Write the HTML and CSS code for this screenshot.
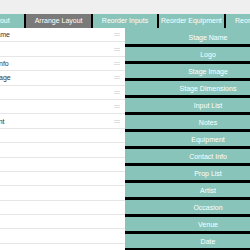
FILE: index.html
```html
<!DOCTYPE html>
<html lang="en">
<head>
  <meta charset="UTF-8">
  <title>Stage Plot | Arrange Layout</title>
  <link rel="stylesheet" href="styles.css">
</head>
<body>
  <div class="page">
    <div class="tabs">
      <div class="tab">Edit Layout</div>
      <div class="tab active">Arrange Layout</div>
      <div class="tab">Reorder Inputs</div>
      <div class="tab">Reorder Equipment</div>
      <div class="tab">Reorder Props</div>
    </div>

    <div class="main">
      <ul class="order-list">
        <li>Stage Name<span class="handle"></span></li>
        <li>Logo<span class="handle"></span></li>
        <li>Contact Info<span class="handle"></span></li>
        <li>Stage Image<span class="handle"></span></li>
        <li>Input List<span class="handle"></span></li>
        <li>Notes<span class="handle"></span></li>
        <li>Equipment<span class="handle"></span></li>
        <li></li>
        <li></li>
        <li></li>
        <li></li>
        <li></li>
        <li></li>
        <li></li>
        <li></li>
      </ul>

      <div class="sections">
        <button>Stage Name</button>
        <button>Logo</button>
        <button>Stage Image</button>
        <button>Stage Dimensions</button>
        <button>Input List</button>
        <button>Notes</button>
        <button>Equipment</button>
        <button>Contact Info</button>
        <button>Prop List</button>
        <button>Artist</button>
        <button>Occasion</button>
        <button>Venue</button>
        <button>Date</button>
      </div>
    </div>
  </div>
</body>
</html>
```

FILE: styles.css
```css
body {
  margin: 0;
  background-color: #efefef;
  font-family: 'Liberation Sans', Arial, sans-serif;
  overflow: hidden;
}

.page {
  width: 332px;
  margin-left: -41px;
}

.tabs {
  display: flex;
  margin-top: 14px;
  height: 14px;
}

.tab {
  flex: 1;
  background-color: #88c4ba;
  color: white;
  font-size: 7px;
  line-height: 14px;
  text-align: center;
  border-left: 1px solid black;
  border-right: 1px solid black;
  white-space: nowrap;
}

.tab.active {
  background-color: #7a7a7a;
}

.main {
  display: grid;
  grid-template-columns: 166px 166px;
}

.order-list {
  list-style: none;
  margin: 0;
  padding: 0;
  background: white;
}

.order-list li {
  display: flex;
  align-items: center;
  justify-content: space-between;
  height: 13.4px;
  padding: 0 5px 0 12px;
  border-bottom: 1px solid #e6e6e6;
  font-size: 7px;
  color: #333;
}

.handle {
  width: 6px;
  height: 1px;
  border-top: 1px solid #e0e0e0;
  border-bottom: 1px solid #e0e0e0;
}

.sections {
  display: flex;
  flex-direction: column;
  padding-top: 2px;
  background-color: #88c4ba;
}

.sections button {
  height: 17px;
  margin: 0;
  padding: 0;
  background-color: #88c4ba;
  color: white;
  font-family: inherit;
  font-size: 7px;
  border: none;
  border-bottom: 3px solid black;
}
```
